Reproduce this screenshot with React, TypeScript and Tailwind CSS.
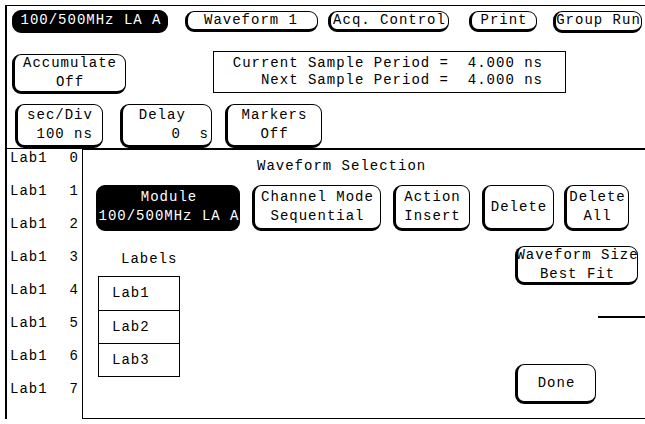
import clsx from 'clsx';

function Key({
  className,
  dark,
  children,
}: {
  className?: string;
  dark?: boolean;
  children: React.ReactNode;
}) {
  return (
    <div
      className={clsx(
        'flex flex-col justify-center rounded-[9px] border border-b-[3px] border-l-[3px] border-black leading-[19px] whitespace-pre',
        dark ? 'bg-black text-white' : 'bg-white text-black',
        className ?? '',
        className?.includes('items-') ? '' : 'items-center'
      )}
    >
      {children}
    </div>
  );
}

const sideLabels = ['0', '1', '2', '3', '4', '5', '6', '7'];

export default function App() {
  return (
    <div className="h-[424px] w-[645px] overflow-hidden bg-white font-['Liberation_Mono',monospace] text-[14px] tracking-[1px] text-black">
      <div className="mt-[5px] ml-[5px] flex h-[414px] flex-col border-t border-l-2 border-black">
        {/* top row */}
        <div className="mt-[4px] flex items-center">
          <Key dark className="ml-[5px] h-[23px] w-[156px]">
            100/500MHz LA A
          </Key>
          <Key className="ml-[17px] h-[21px] w-[133px] items-start pl-[16px]">Waveform 1</Key>
          <Key className="ml-[10px] h-[21px] w-[121px]">Acq. Control</Key>
          <Key className="ml-[20px] h-[21px] w-[68px]">Print</Key>
          <Key className="ml-[16px] h-[22px] w-[89px]">Group Run</Key>
        </div>

        {/* second row */}
        <div className="mt-[18px] flex items-start">
          <Key className="mt-[3px] ml-[5px] h-[40px] w-[114px]">
            <span>Accumulate</span>
            <span>Off</span>
          </Key>
          <div className="ml-[87px] flex h-[42px] w-[353px] flex-col items-end justify-center border border-black pr-[22px] leading-[17px] whitespace-pre">
            <span>Current Sample Period =  4.000 ns</span>
            <span>Next Sample Period =  4.000 ns</span>
          </div>
        </div>

        {/* third row */}
        <div className="mt-[10px] flex items-start">
          <Key className="ml-[8px] h-[44px] w-[88px]">
            <span>sec/Div</span>
            <span> 100 ns</span>
          </Key>
          <Key className="ml-[17px] h-[44px] w-[92px]">
            <span>Delay </span>
            <span className="self-end pr-[2px]">0  s</span>
          </Key>
          <Key className="ml-[13px] h-[44px] w-[97px]">
            <span>Markers</span>
            <span>Off</span>
          </Key>
        </div>

        {/* lower area */}
        <div className="flex flex-1">
          <div className="flex w-[76px] flex-col border-t border-r border-black pr-[3px] pl-[3px]">
            {sideLabels.map((n) => (
              <div key={n} className="flex h-[33px] justify-between leading-[18px]">
                <span>Lab1</span>
                <span>{n}</span>
              </div>
            ))}
          </div>

          <div className="flex flex-1 flex-col border-t-2 border-b border-black">
            <div className="mt-[7px] ml-[174px] leading-[18px]">Waveform Selection</div>

            <div className="mt-[10px] flex items-start">
              <Key dark className="ml-[13px] h-[46px] w-[144px]">
                <span>Module</span>
                <span>100/500MHz LA A</span>
              </Key>
              <Key className="ml-[12px] h-[46px] w-[129px]">
                <span>Channel Mode</span>
                <span>Sequential</span>
              </Key>
              <Key className="ml-[12px] h-[46px] w-[77px]">
                <span>Action</span>
                <span>Insert</span>
              </Key>
              <Key className="ml-[12px] h-[46px] w-[72px]">Delete</Key>
              <Key className="ml-[10px] h-[46px] w-[65px]">
                <span>Delete</span>
                <span>All</span>
              </Key>
            </div>

            <div className="flex flex-1">
              <div className="ml-[15px] flex flex-col">
                <div className="mt-[19px] ml-[23px] leading-[18px]">Labels</div>
                <div className="mt-[8px] flex w-[82px] flex-col border border-black">
                  {['Lab1', 'Lab2', 'Lab3'].map((l, i) => (
                    <div
                      key={l}
                      className={clsx(
                        'flex h-[33px] items-center pl-[13px]',
                        i > 0 && 'border-t border-black'
                      )}
                    >
                      {l}
                    </div>
                  ))}
                </div>
              </div>

              <div className="ml-auto flex w-[130px] flex-col">
                <Key className="mt-[15px] h-[39px] w-[123px]">
                  <span>Waveform Size</span>
                  <span>Best Fit</span>
                </Key>
                <div className="mt-[31px] h-[2px] w-[47px] self-end bg-black" />
                <Key className="mt-[46px] h-[40px] w-[81px]">Done</Key>
              </div>
            </div>
          </div>
        </div>
      </div>
    </div>
  );
}
